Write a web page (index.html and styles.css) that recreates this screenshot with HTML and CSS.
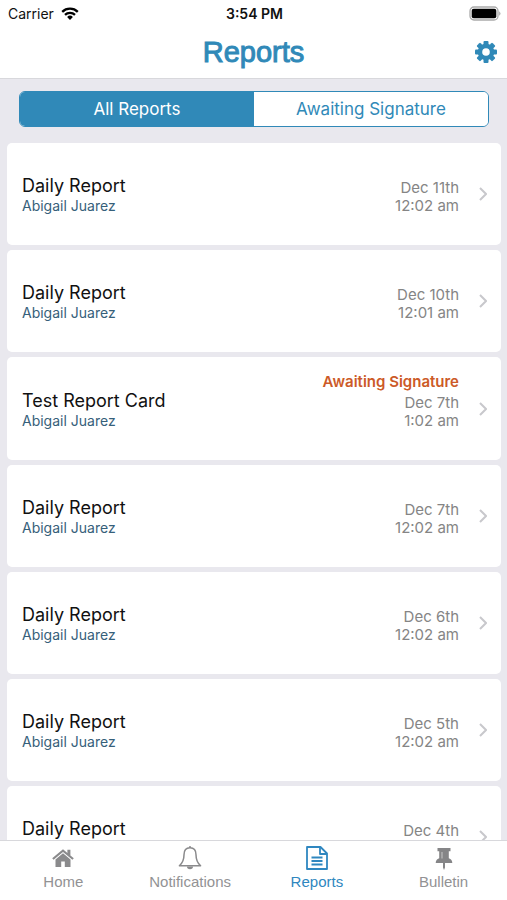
FILE: index.html
```
<!DOCTYPE html>
<html lang="en">
<head>
  <meta charset="UTF-8">
  <meta name="viewport" content="width=device-width, initial-scale=1">
  <title>Reports</title>
  <link rel="stylesheet" href="styles.css">
</head>
<body>

<!-- STATUS BAR -->
<div class="status">
  <div class="carrier">
    <span>Carrier</span>
    <svg width="18" height="13" viewBox="0 0 18 13" fill="none" stroke="#000" stroke-width="2.3">
      <path d="M1.2 4.8a11.2 11.2 0 0 1 15.6 0"/>
      <path d="M4 7.9a7.2 7.2 0 0 1 10 0"/>
      <path d="M9 13L6.1 10a4.2 4.2 0 0 1 5.8 0z" fill="#000" stroke="none"/>
    </svg>
  </div>
  <span class="time">3:54 PM</span>
  <svg class="battery" width="32" height="15" viewBox="0 0 32 15">
    <rect x="1" y="1" width="28" height="13" rx="4" fill="none" stroke="#aaa" stroke-width="1.3"/>
    <rect x="2.7" y="2.7" width="24.6" height="9.6" rx="2" fill="#000"/>
    <path d="M30.3 5.2q2.2 2.3 0 4.6z" fill="#999"/>
  </svg>
</div>

<header class="header">
  <h1>Reports</h1>
  <button class="settings" aria-label="Settings">
    <svg width="22" height="22" viewBox="-11 -11 22 22">
      <g fill="#3089b8">
        <rect x="-2.5" y="-11" width="5" height="22" rx="1"/>
        <rect x="-2.5" y="-11" width="5" height="22" rx="1" transform="rotate(45)"/>
        <rect x="-2.5" y="-11" width="5" height="22" rx="1" transform="rotate(90)"/>
        <rect x="-2.5" y="-11" width="5" height="22" rx="1" transform="rotate(135)"/>
        <circle r="8.3"/>
      </g>
      <circle r="3.8" fill="#fff"/>
    </svg>
  </button>
</header>

<main class="content">
  <div class="segments">
    <button class="segment selected" aria-pressed="true">All Reports</button>
    <button class="segment" aria-pressed="false">Awaiting Signature</button>
  </div>

  <div class="list">
    <a class="card" href="#">
      <div class="info"><div class="name">Daily Report</div><div class="child">Abigail Juarez</div></div>
      <div class="date">Dec 11th<br>12:02 am</div>
      <svg class="arrow" width="8" height="14" viewBox="0 0 8 14"><path d="M1 1l6 6-6 6"/></svg>
    </a>
    <a class="card" href="#">
      <div class="info"><div class="name">Daily Report</div><div class="child">Abigail Juarez</div></div>
      <div class="date">Dec 10th<br>12:01 am</div>
      <svg class="arrow" width="8" height="14" viewBox="0 0 8 14"><path d="M1 1l6 6-6 6"/></svg>
    </a>
    <a class="card unsigned" href="#">
      <div class="info"><div class="name">Test Report Card</div><div class="child">Abigail Juarez</div></div>
      <div class="date"><div class="awaiting">Awaiting Signature</div>Dec 7th<br>1:02 am</div>
      <svg class="arrow" width="8" height="14" viewBox="0 0 8 14"><path d="M1 1l6 6-6 6"/></svg>
    </a>
    <a class="card" href="#">
      <div class="info"><div class="name">Daily Report</div><div class="child">Abigail Juarez</div></div>
      <div class="date">Dec 7th<br>12:02 am</div>
      <svg class="arrow" width="8" height="14" viewBox="0 0 8 14"><path d="M1 1l6 6-6 6"/></svg>
    </a>
    <a class="card" href="#">
      <div class="info"><div class="name">Daily Report</div><div class="child">Abigail Juarez</div></div>
      <div class="date">Dec 6th<br>12:02 am</div>
      <svg class="arrow" width="8" height="14" viewBox="0 0 8 14"><path d="M1 1l6 6-6 6"/></svg>
    </a>
    <a class="card" href="#">
      <div class="info"><div class="name">Daily Report</div><div class="child">Abigail Juarez</div></div>
      <div class="date">Dec 5th<br>12:02 am</div>
      <svg class="arrow" width="8" height="14" viewBox="0 0 8 14"><path d="M1 1l6 6-6 6"/></svg>
    </a>
    <a class="card" href="#">
      <div class="info"><div class="name">Daily Report</div></div>
      <div class="date">Dec 4th</div>
      <svg class="arrow" width="8" height="14" viewBox="0 0 8 14"><path d="M1 1l6 6-6 6"/></svg>
    </a>
  </div>
</main>

<!-- TAB BAR -->
<nav class="tabs">
  <a class="tab" href="#">
    <svg width="24" height="26" viewBox="0 0 24 26">
      <path d="M12 4.2L1.2 13.3l1.4 1.5L12 7l9.4 7.8 1.4-1.5-3.4-2.9V4.7h-3v3.2z" fill="#8a8a8c"/>
      <path d="M12 8.2l-7.5 6.3V22h5.7v-5.4h3.6V22h5.7v-7.5z" fill="#8a8a8c"/>
    </svg>
    Home
  </a>
  <a class="tab" href="#">
    <svg width="24" height="26" viewBox="0 0 24 26" fill="none" stroke="#8a8a8c" stroke-width="1.5" stroke-linejoin="round">
      <path d="M12 2.8c-4.2 0-6 3-6 7 0 5-1.2 8-4.6 11h21.2c-3.4-3-4.6-6-4.6-11 0-4-1.8-7-6-7z"/>
      <path d="M12 1v2"/>
      <path d="M9 21.5a3 2.8 0 0 0 6 0z" fill="#8a8a8c" stroke="none"/>
    </svg>
    Notifications
  </a>
  <a class="tab active" href="#" aria-current="page">
    <svg width="24" height="26" viewBox="0 0 24 26" fill="none" stroke="#2f87c0" stroke-width="1.8" stroke-linejoin="round">
      <path d="M2 2h13.5l6.5 6.5V24H2z"/>
      <path d="M15 2v7h7"/>
      <path d="M6.5 12.5h11M6.5 16h11M6.5 19.5h11"/>
    </svg>
    Reports
  </a>
  <a class="tab" href="#">
    <svg width="24" height="26" viewBox="0 0 24 26">
      <path d="M5.5 3h13v3.2h-1.7v7q3.5 1.2 3.5 4.8h-7.3v4.5l-1 2.5-1-2.5V18H3.7q0-3.6 3.5-4.8v-7H5.500z" fill="#858587"/>
      <path d="M10 7v6.500" stroke="#c8c8c8"/>
    </svg>
    Bulletin
  </a>
</nav>

</body>
</html>
```
FILE: styles.css
```
* { box-sizing: border-box; }
body { margin: 0; height: 100vh; display: flex; flex-direction: column; overflow: hidden; font-family: Inter, sans-serif; background: #fff; color: #111; }
a { color: inherit; text-decoration: none; }
button { font: inherit; cursor: pointer; }
svg { display: block; flex: none; }

.status { display: grid; grid-template-columns: 1fr auto 1fr; align-items: center; height: 27px; padding: 0 6px 0 8px; font-size: 14px; }
.carrier { display: flex; align-items: center; gap: 7px; }
.time { font-weight: 600; }
.battery { justify-self: end; }

.header { display: grid; grid-template-columns: 1fr auto 1fr; align-items: center; height: 52px; padding: 0 10px 1px; border-bottom: 1px solid #d8d8dc; }
.header h1 { grid-column: 2; margin: 0; font-family: "Liberation Sans", Arial, sans-serif; font-size: 29px; font-weight: 400; color: #3089b8; -webkit-text-stroke: 1px #3089b8; }
.settings { justify-self: end; padding: 0; border: 0; background: none; }

.content { flex: 1; min-height: 0; overflow: hidden; background: #e9e8ee; }
.segments { display: flex; height: 36px; margin: 12px 18px 16px 19px; border: 1px solid #3089b8; border-radius: 6px; background: #fff; overflow: hidden; }
.segment { flex: 1; padding: 0; border: 0; background: #fff; color: #3089b8; font-size: 17px; }
.segment.selected { background: #3089b8; color: #fff; }

.list { display: flex; flex-direction: column; gap: 5px; padding: 0 6px 0 7px; }
.card { display: flex; align-items: center; height: 102px; padding: 0 14px 0 15px; background: #fff; border-radius: 5px; }
.info { flex: 1; height: 38px; }
.name { font-size: 18px; line-height: 22px; color: #111; }
.child { font-size: 14px; line-height: 18px; color: #36607a; }
.date { height: 30px; font-size: 15px; line-height: 18px; text-align: right; color: #858585; }
.unsigned { height: 103px; }
.unsigned .date { height: 72px; }
.awaiting { margin-bottom: 3px; font-weight: 600; color: #cc5a28; }
.arrow { margin-left: 20px; fill: none; stroke: #c8c8cc; stroke-width: 2; }

.tabs { display: flex; height: 60px; border-top: 1px solid #d8d8dc; background: #fff; font-family: "Liberation Sans", Arial, sans-serif; }
.tab { flex: 1; display: flex; flex-direction: column; align-items: center; gap: 2px; padding-top: 4px; font-size: 15px; line-height: 18px; color: #929294; }
.tab.active { color: #2f87c0; }
```
